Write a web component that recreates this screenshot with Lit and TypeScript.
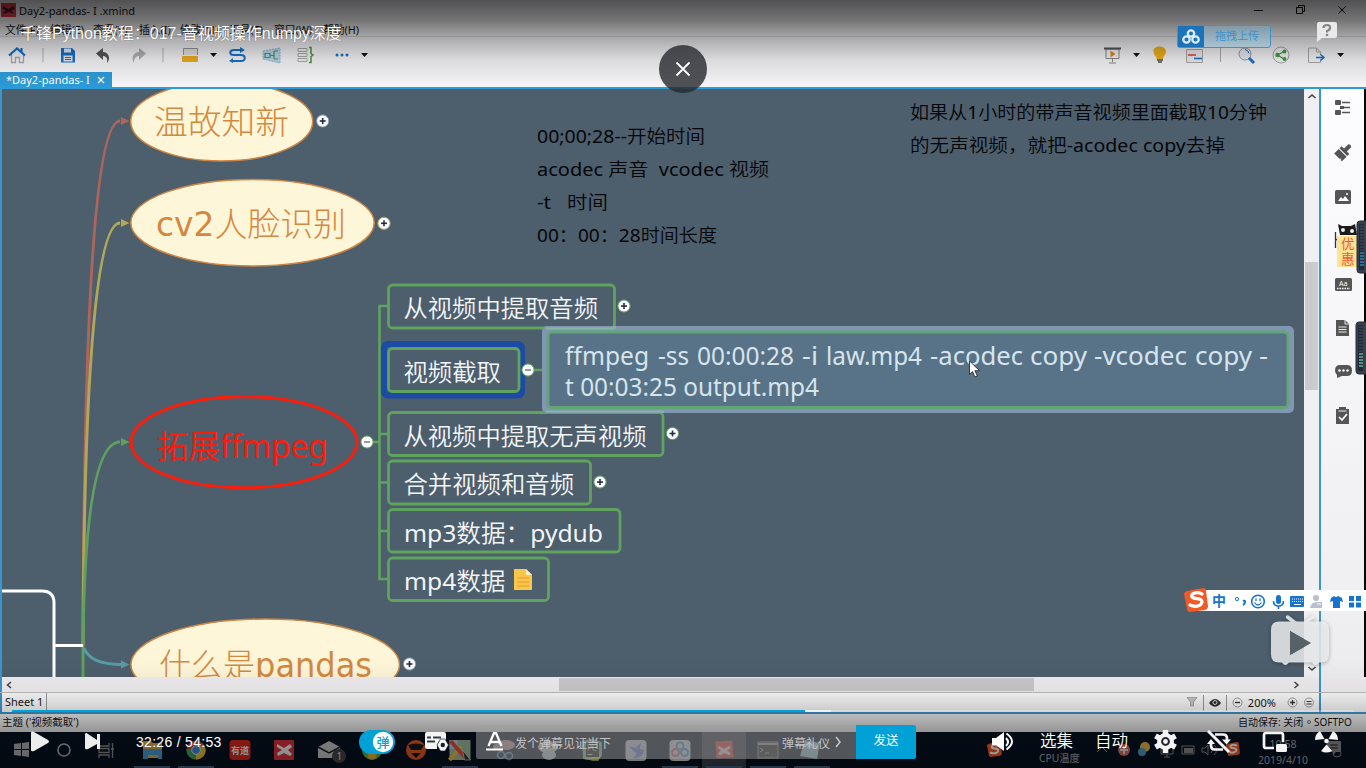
import { LitElement, html, svg, css } from "lit";
import { customElement } from "lit/decorators.js";

const icon = (w: number, h: number, body: unknown) =>
  html`<svg width=${w} height=${h} viewBox="0 0 ${w} ${h}" fill="none">${body}</svg>`;

const caret = icon(8, 20, svg`<path d="M0 8h7L3.500 12z" fill="#111"/>`);
const sogou = svg`<path d="M3 3L19 0Q22 0 22 3L24 18Q24 21 21 22L6 24Q3 24 3 21L0 6Q0 4 3 3z" fill="#f15a24"/><path d="M18 6C12 3 6 6 8 9C10 12 18 9 18 14C17 19 10 19 6 17" stroke="#fff" stroke-width="3.2" stroke-linecap="round"/>`;

/* Taskbar button: artwork centred in a 44px slot, with an optional running mark. */
const app = (cx: number, body: unknown, running = false) =>
  icon(44, 36, svg`<g transform="translate(${22 - cx} 0)">${body}</g>${running ? svg`<path d="M4 35h36" stroke="#3f5f7d" stroke-width="2"/>` : ""}`);

/* Chinese runs are set in a lighter weight than the Latin ones. */
const runs = (t: string) =>
  (t.match(/[\u2e80-\u9fff\uff00-\uffef]+|[^\u2e80-\u9fff\uff00-\uffef]+/g) ?? []).map((r) =>
    /[\u2e80-\u9fff\uff00-\uffef]/.test(r) ? svg`<tspan class="cjk">${r}</tspan>` : svg`<tspan>${r}</tspan>`);

/* ---------- mind map canvas ---------- */
interface Topic { y: number; w: number; h: number; text: string; tx: number; tw: number; plus?: number; }

const topics: Topic[] = [
  { y: 285, w: 226, h: 43, text: "从视频中提取音频", tx: 403.5, tw: 194.5, plus: 624 },
  { y: 348.5, w: 130.5, h: 43, text: "视频截取", tx: 403.5, tw: 97.5 },
  { y: 412.5, w: 274.5, h: 43, text: "从视频中提取无声视频", tx: 403.5, tw: 243, plus: 672.5 },
  { y: 461, w: 202, h: 43, text: "合并视频和音频", tx: 403.5, tw: 170.5, plus: 600 },
  { y: 509.5, w: 231.5, h: 42.5, text: "mp3数据：pydub", tx: 404, tw: 199 },
  { y: 558, w: 160, h: 42.5, text: "mp4数据", tx: 404, tw: 101.5 },
];

const command: [number, number, string][] = [
  [565, 84, "ffmpeg"], [658, 31, "-ss"], [697, 97, "00:00:28"], [802, 16, "-i"], [826, 96, "law.mp4"],
  [930, 93, "-acodec"], [1030, 57, "copy"], [1094, 93, "-vcodec"], [1195, 57, "copy"], [1259, 9, "-"],
];

const toggle = (x: number, y: number, ring: string, minus = false) => svg`
  <circle cx=${x} cy=${y} r="6.1" fill="#fff" stroke=${ring} stroke-width="1"/>
  <path d="M${x - 3} ${y}h6" stroke=${minus ? "#7c8094" : "#242a4c"} stroke-width="1.6"/>
  ${minus ? "" : svg`<path d="M${x} ${y - 3}v6" stroke="#242a4c" stroke-width="1.6"/>`}`;

@customElement("mind-canvas")
export class MindCanvas extends LitElement {
  static styles = css`
    :host { display: block; overflow: hidden; background: #4d5e6d; }
    svg { display: block; }
    text { font-family: "Noto Sans", "Noto Sans CJK SC", sans-serif; }
    .note { font-size: 18.5px; fill: #050608; }
    .cjk { font-weight: 350; }
    .topic { font-size: 24.3px; fill: #f2f5f7; }
    .cmd { font-size: 24.5px; fill: #d6e4ee; }
    .main { font-family: "DejaVu Sans", "Noto Sans CJK SC", sans-serif; font-size: 33.5px; fill: #d4883f; }
    .main .cjk { font-weight: 300; }
    .red { font-family: "Noto Sans", "Noto Sans CJK SC", sans-serif; font-size: 32px; fill: #fb1d0c; }
  `;

  private note(x: number, y: number, w: number, t: string) {
    return svg`<text class="note" x=${x} y=${y} textLength=${w} lengthAdjust="spacingAndGlyphs" xml:space="preserve">${runs(t)}</text>`;
  }

  private main(x: number, y: number, w: number, t: string) {
    return svg`<text class="main" x=${x} y=${y} textLength=${w} lengthAdjust="spacingAndGlyphs">${runs(t)}</text>`;
  }

  render() {
    const ring = "#5fa35f";
    return html`<svg width="1302" height="588" viewBox="2 89 1302 588" fill="none">
      <g stroke-width="3">
        <path d="M83 646C84 330 94 121 120 121" stroke="#b0655c"/>
        <path d="M83 646C84 400 94 223 120 223" stroke="#b0a858"/>
        <path d="M83 677V646C84 540 92 442 120 442" stroke="#5fa05e"/>
        <path d="M84 648C89 661 104 664.500 121 664.500" stroke="#569ca3"/>
        <path d="M2 591H42Q54 591 54 603V677M54 645.500H83" stroke="#fff"/>
      </g>
      <path d="M121 117L129.500 121L121 125z" fill="#b0655c"/>
      <path d="M121 219L129.500 223L121 227z" fill="#b0a858"/>
      <path d="M121 438L129.500 442L121 446z" fill="#5fa05e"/>
      <path d="M121 660.500L129.500 664.500L121 668.500z" fill="#569ca3"/>

      <g fill="#fdf6d8" stroke="#cd8444" stroke-width="1.5">
        <ellipse cx="221.700" cy="121.500" rx="91" ry="39.500"/>
        <ellipse cx="252.500" cy="222.700" rx="121.700" ry="43.300"/>
        <ellipse cx="265.200" cy="664.500" rx="134.300" ry="45.500"/>
      </g>
      <ellipse cx="244" cy="442.200" rx="113" ry="45.500" stroke="#fb1d0c" stroke-width="3"/>
      ${this.main(154, 133.5, 135, "温故知新")}
      ${this.main(156, 236, 190, "cv2人脸识别")}
      <text class="main red" x="157" y="457.500" textLength="171" lengthAdjust="spacingAndGlyphs">拓展ffmpeg</text>
      ${this.main(159, 676.5, 213, "什么是pandas")}

      <path d="M388 306H379.500V579H388M379.500 434H388M379.500 482.500H388M379.500 531H388M372 442H380M526 370H548" stroke=${ring} stroke-width="2.6"/>
      <rect x="384" y="344" width="138" height="51.500" rx="4" stroke="#1b4ba4" stroke-width="6"/>
      ${topics.map((t) => svg`
        <rect x="388.500" y=${t.y} width=${t.w} height=${t.h} rx="4" stroke=${ring} stroke-width="2.8"/>
        <text class="topic" x=${t.tx} y=${t.y + 32} textLength=${t.tw} lengthAdjust="spacingAndGlyphs">${runs(t.text)}</text>
        ${t.plus ? toggle(t.plus, t.y + 21, ring) : ""}`)}
      <path d="M514 569h12l6 6v15h-18z" fill="#fbc549"/><path d="M526 569l6 6h-6z" fill="#fff0bd"/>
      <path d="M517 578h12M517 582h12M517 586h12" stroke="#e0a030" stroke-width="1"/>
      ${toggle(367, 442, ring, true)}
      ${toggle(528, 370, ring, true)}
      ${toggle(322.7, 121, "#8899b5")}
      ${toggle(384, 223.3, "#b0a858")}
      ${toggle(409.5, 664, "#8899b5")}

      <rect x="542" y="326" width="752" height="87" rx="5" fill="#8096b1"/>
      <rect x="548" y="332" width="740" height="75.500" rx="4" fill="#587387" stroke="#62a578" stroke-width="2.8"/>
      <path d="M546 328.500H614.500V326" stroke="#86b5a3" stroke-width="2"/>
      <path d="M546 411.500H664" stroke="#86b5a3" stroke-width="2"/>
      ${command.map(([x, w, t]) => svg`<text class="cmd" x=${x} y="364.500" textLength=${w} lengthAdjust="spacingAndGlyphs">${t}</text>`)}
      <text class="cmd" x="565" y="396" textLength="254" lengthAdjust="spacingAndGlyphs">t 00:03:25 output.mp4</text>
      <path d="M969.500 361v13.500l3-3 2.400 5.500 2.500-1-2.500-5.300h4.600z" fill="#fff" stroke="#151a20" stroke-width=".8"/>

      ${this.note(537, 143, 168, "00;00;28--开始时间")}
      ${this.note(537, 176, 232, "acodec 声音  vcodec 视频")}
      ${this.note(537, 209, 71, "-t   时间")}
      ${this.note(537, 242, 180, "00：00：28时间长度")}
      ${this.note(910, 119, 357, "如果从1小时的带声音视频里面截取10分钟")}
      ${this.note(910, 152, 315, "的无声视频，就把-acodec copy去掉")}
    </svg>`;
  }
}

/* ---------- desktop: editor window and taskbar ---------- */
@customElement("desktop-view")
export class DesktopView extends LitElement {
  static styles = css`
    :host { display: grid; grid-template-rows: 20px 17px 35px 17px 588px 15px 20px 20px 36px; width: 1366px; height: 768px; overflow: hidden;
      background: #f6f5f8; color: #151515; font-family: "Noto Sans", "Noto Sans CJK SC", sans-serif; font-size: 11px; white-space: nowrap; }
    svg { display: block; flex: none; }
    .title { display: grid; grid-template-columns: 19px 1235px 42px 41px 20px; align-items: center; }
    .menu { display: grid; grid-template-columns: 45px 43px 46px 41px 49px 45px 49px 60px; padding-left: 5px; line-height: 20px; font-size: 10.8px; border-bottom: 1px solid #d8d8d8; box-sizing: border-box; }
    .tools { display: grid; padding: 8px 0 0 8px; align-items: start;
      grid-template-columns: 34px 18px 36px 35px 31px 20px 28px 19px 33px 35px 38px 26px 743px 29px 20px 33px 34px 18px 34px 36px 29px 10px; }
    .tabs { display: flex; border-bottom: 2px solid #2c9bd8; box-sizing: border-box; }
    .tab { width: 106px; padding-left: 6px; background: #2c9bd8; color: #fff; line-height: 15px; height: 15px; display: flex; gap: 7px; align-items: center; }
    .work { display: grid; grid-template-columns: 2px 1302px 15px 2px 43px 2px; }
    .blue { background: #3a97ce; }
    .black { background: #070707; }
    .vs { background: #f0eff1; display: flex; flex-direction: column; align-items: center; justify-content: space-between; }
    .vthumb { width: 13px; height: 128px; background: #cbcacc; margin-top: 34px; margin-bottom: 149px; }
    .side { display: flex; flex-direction: column; gap: 24px; padding: 10px 0 0 13px; box-sizing: border-box; background: linear-gradient(#fdfcff, #ededef); }
    .hs { display: grid; grid-template-columns: 2px 557px 475px 256px 29px 2px 45px; background: #efedef; align-items: center; }
    .hthumb { height: 13px; background: #cbc9cb; }
    .full { height: 100%; }
    .sheet { display: grid; grid-template-columns: 2px 45px 1139px 17px 28px 14px 42px 16px 16px 2px 45px; align-items: center; border-top: 1px solid #bbb; background: #fafafa; box-sizing: border-box; }
    .name { height: 19px; line-height: 18px; border-right: 1px solid #999; padding-left: 3px; box-sizing: border-box; }
    .status { display: grid; grid-template-columns: 1236px 69px 7px 52px; padding-left: 2px; border-top: 2px solid #3a93c8; box-sizing: border-box; line-height: 17px; background: #eee; font-size: 10.5px; }
    .small { font-size: 10px; }
    .task { display: grid; grid-template-columns: 43px 41px 32px repeat(16, 44px) 205px 58px 21px 20px 22px 21px 20px 25px 24px 72px 40px; padding-left: 14px; background: #07111f; align-items: center; color: #a4a6aa; box-sizing: border-box; width: 1366px; overflow: hidden; }
    .clock { line-height: 16px; text-align: center; font-size: 10.5px; width: 66px; padding-top: 4px; }
    .cpu { align-self: end; line-height: 20px; font-size: 10.3px; }
  `;

  render() {
    return html`
      <div class="title">
        ${icon(18, 20, svg`<rect x="1" y="3" width="15" height="14" fill="#e0394a"/><path d="M3 6l5.500 3L13 6l2 3-3.500 1.500L14 14l-5-2-5 2-1-1.500 3-2-4-2z" fill="#4a1a22"/>`)}
        <span>Day2-pandas- I .xmind</span>
        ${icon(12, 20, svg`<path d="M0 10.500h9" stroke="#111"/>`)}
        ${icon(12, 20, svg`<path d="M.5 7.500h6v6h-6zM2.500 7.500v-2h6v6h-2" stroke="#111"/>`)}
        ${icon(12, 20, svg`<path d="M1 6l8 8M9 6l-8 8" stroke="#111"/>`)}
      </div>
      <div class="menu"><span>文件(F)</span><span>编辑(E)</span><span>查看(V)</span><span>插入(I)</span><span>修改(M)</span><span>工具(T)</span><span>窗口(W)</span><span>帮助(H)</span></div>
      <div class="tools">
        ${icon(20, 20, svg`<path d="M3.500 9v8.500h4v-5h4v5h4V9" stroke="#aaa" stroke-width="1.300"/><path d="M1 10.500L9 3.500l8 7M13.500 3v4.500" stroke="#1674cf" stroke-width="2.200"/>`)}
        ${icon(4, 20, svg`<path d="M1 3v14" stroke="#b8b8b8"/>`)}
        ${icon(17, 20, svg`<path d="M1 3h11l3 3v11.500H1z" fill="#1674cf"/><path d="M4 3.500h7v4H4zM3.500 10.500h9v6h-9z" fill="#e8eef8"/><path d="M5 12.500h6M5 14.500h6" stroke="#1674cf"/>`)}
        ${icon(17, 20, svg`<path d="M0 8.500L7 3v4c6 0 8 7 4 11 1-5-1-7-4-7v4z" fill="#555"/>`)}
        ${icon(17, 20, svg`<path d="M15 8.500L8 3v4c-6 0-8 7-5 11 0-5 2-7 5-7v4z" fill="#b3b3b3"/>`)}
        ${icon(4, 20, svg`<path d="M1 3v14" stroke="#b8b8b8"/>`)}
        ${icon(18, 20, svg`<path d="M1.500 10V3.500h14V10" stroke="#999" fill="#e4e4e4"/><rect x="0" y="11" width="16" height="6" rx="1" fill="#eead1c"/>`)}
        ${caret}
        ${icon(18, 20, svg`<path d="M14 5H5C0 5 0 10 5 10h7c5 0 5 6 0 6H2" stroke="#1674cf" stroke-width="2"/><path d="M11 2l5 3-5 3zM4 13l-4 3 4 2z" fill="#1674cf"/>`)}
        ${icon(19, 20, svg`<path d="M1 6l17-3v15L1 14z" fill="#bad9ec" stroke="#88b6d3" stroke-dasharray="2 1"/><path d="M3 8.500h5v4H3zM12 6h4M12 14h4M8 10.500h4M12 6v8" stroke="#4a9762" stroke-width="1.200"/>`)}
        ${icon(18, 20, svg`<path d="M1 3.500h9v3H1zM1 8.500h9v3H1zM1 13.500h9v3H1z" stroke="#aaa"/><path d="M12 2.500h2v6l2 1.500-2 1.500v6h-2" stroke="#4a9b48" stroke-width="1.500"/>`)}
        ${icon(16, 20, svg`<g fill="#1674cf"><circle cx="2" cy="10" r="1.500"/><circle cx="7" cy="10" r="1.500"/><circle cx="12" cy="10" r="1.500"/></g>`)}
        ${caret}
        ${icon(19, 20, svg`<path d="M2 4h13v9.500H2zM8.500 13v4M5 18h7" stroke="#888"/><path d="M0 3.500h17" stroke="#555" stroke-width="2"/><path d="M6.500 5.500l5 3.500-5 3.500z" fill="#e78a12"/>`)}
        ${caret}
        ${icon(15, 20, svg`<path d="M3.500 12.500C-3 5 2 1.500 6.500 1.500s10 3.500 3.500 11v2h-6.500z" fill="#efb31c"/><path d="M4 15h6M5 17h4" stroke="#777" stroke-width="2"/>`)}
        ${icon(18, 20, svg`<path d="M.5 4.500h16v13H.5z" stroke="#aaa" fill="#eee"/><path d="M2 10h8" stroke="#e2443c" stroke-width="1.600"/><path d="M8 13.500h8" stroke="#1674cf" stroke-width="1.600"/>`)}
        ${icon(4, 20, svg`<path d="M0.500 3v14" stroke="#aaa"/>`)}
        ${icon(18, 20, svg`<circle cx="7" cy="9" r="6" stroke="#999" fill="#e7edf4"/><path d="M11 13l5 5" stroke="#1674cf" stroke-width="3"/><path d="M7 4.500q4 1 4 4" stroke="#1674cf"/>`)}
        ${icon(19, 20, svg`<circle cx="9" cy="10" r="8" stroke="#aaa"/><path d="M12 6.500L5.500 10l6.500 4" stroke="#4a9b48" stroke-width="1.300"/><g fill="#4a9b48"><circle cx="12.500" cy="6.500" r="2"/><circle cx="5.500" cy="10" r="2.200"/><circle cx="12.500" cy="14" r="2"/></g>`)}
        ${icon(18, 20, svg`<path d="M.5 3h8l4 4v3M12.500 14.500v3H.5V3M8.500 3v4h4" stroke="#aaa"/><path d="M8 12.500h7M12.500 9.500l3.500 3-3.500 3" stroke="#1674cf" stroke-width="1.500"/>`)}
        ${caret}
      </div>
      <div class="tabs"><div class="tab"><span>*Day2-pandas- I</span>${icon(8, 8, svg`<path d="M1 1l6 6M7 1L1 7" stroke="#fff" stroke-width="1.300"/>`)}</div></div>
      <div class="work">
        <div class="blue"></div>
        <mind-canvas></mind-canvas>
        <div class="vs">
          ${icon(13, 14, svg`<path d="M3.500 9l3.500-3 3.500 3" stroke="#444" stroke-width="1.600"/>`)}
          <div class="vthumb"></div>
          ${icon(13, 14, svg`<path d="M3.500 4l3.500 3L10.500 4" stroke="#444" stroke-width="1.600"/>`)}
        </div>
        <div class="blue"></div>
        <div class="side">
          ${icon(20, 20, svg`<g fill="#555"><rect x="1" y="1" width="6" height="5" rx="1"/><rect x="1" y="11" width="6" height="5" rx="1"/><rect x="6" y="7" width="4" height="3"/></g><path d="M8 3.500h8M10 8.500h6M8 13.500h8" stroke="#555" stroke-width="1.500"/>`)}
          ${icon(20, 20, svg`<g transform="translate(9 9.500) rotate(45)" fill="#555"><path d="M-2-9.500q2-2 4 0v6h3.500v3h-11v-3H-2z"/><path d="M-5.500 .5h11V7h-2V5.500L2 7h-7.500z"/></g>`)}
          ${icon(20, 20, svg`<rect x="1" y="3" width="16" height="14" rx="1.500" fill="#555"/><path d="M4 14l3-4 2 2 2-3 4 5z" fill="#fff"/><circle cx="13" cy="7" r="1" fill="#fff"/>`)}
          ${icon(20, 20, svg`<path d="M1.500 1v16M1 9l4-1" stroke="#333" stroke-width="1.300"/>`)}
          ${icon(20, 20, svg`<rect x="1" y="3" width="17" height="13" rx="1.500" fill="#555"/><path d="M3 13.500h13" stroke="#fff" stroke-width="1.500" stroke-dasharray="1.500 1"/><text x="5" y="10.500" font-size="7" fill="#fff">Aa</text>`)}
          ${icon(20, 20, svg`<path d="M2 1h9l4 4v12H2z" fill="#555"/><path d="M11 1v4h4M4.500 8h8M4.500 10.500h8M4.500 13h8" stroke="#e9e9e9"/>`)}
          ${icon(20, 20, svg`<path d="M6 2h7q5 0 5 5.500T13 13H8l-5 2v-3q-2-2-2-4.500Q1 2 6 2z" fill="#555"/><g fill="#fff"><circle cx="5.500" cy="7.500" r="1.200"/><circle cx="9.500" cy="7.500" r="1.200"/><circle cx="13.500" cy="7.500" r="1.200"/></g>`)}
          ${icon(20, 20, svg`<path d="M2 2h13v15H2zM5 0h7v2H5z" fill="#555"/><path d="M4.500 4h8" stroke="#eee"/><path d="M5 10l3 3 5-6" stroke="#fff" stroke-width="1.700"/>`)}
        </div>
        <div class="black"></div>
      </div>
      <div class="hs">
        <div class="blue full"></div>${icon(14, 14, svg`<path d="M9 4L5.500 7 9 10" stroke="#444" stroke-width="1.500"/>`)}
        <div class="hthumb"></div><span></span>${icon(14, 14, svg`<path d="M4.500 4L8 7l-3.500 3" stroke="#444" stroke-width="1.500"/>`)}<div class="blue full"></div>
      </div>
      <div class="sheet">
        <div class="blue full"></div><div class="name">Sheet 1</div><span></span>
        ${icon(14, 18, svg`<path d="M1 3.500h10L7.500 8v4h-3V8z" fill="#c7c7c7" stroke="#aaa"/>`)}
        ${icon(24, 18, svg`<path d="M.5 1v16M23.500 1v16" stroke="#999"/><path d="M6 9q6-8 12 0q-6 7.500-12 0z" fill="#333"/><circle cx="12" cy="8.500" r="2" stroke="#ddd"/>`)}
        ${icon(14, 18, svg`<circle cx="6.500" cy="8.500" r="4.500" stroke="#999"/><path d="M4 8.500h5" stroke="#333" stroke-width="1.300"/>`)}
        <span>&nbsp;200%</span>
        ${icon(14, 18, svg`<circle cx="5.500" cy="8.500" r="4.500" stroke="#999"/><path d="M3 8.500h5M5.500 6v5" stroke="#333" stroke-width="1.300"/>`)}
        ${icon(14, 18, svg`<circle cx="6" cy="8.500" r="4.500" stroke="#999"/><path d="M3.500 7.500h5M3.500 10h5" stroke="#333"/>`)}
        <div class="blue full"></div>
      </div>
      <div class="status"><span>主题 ('视频截取')</span><span class="small">自动保存: 关闭</span>${icon(7, 16, svg`<circle cx="2" cy="8" r="1.500" stroke="#777"/>`)}<span class="small">SOFTPO</span></div>
      <div class="task">
        ${icon(16, 36, svg`<path d="M0 12l7-1v6H0zM8 11l7-1v7H8zM0 18h7v6l-7-1zM8 18h7v7l-7-1z" fill="#a9abb0"/>`)}
        ${icon(18, 36, svg`<circle cx="7" cy="18" r="6" stroke="#a9abb0" stroke-width="1.600"/>`)}
        ${icon(20, 36, svg`<path d="M1 11v3h10v-3M1 26v-3h10v3M1 16.500h10v4H1zM14.500 11v15M13 17h3" stroke="#888" stroke-width="1.300"/>`)}
        ${app(17, svg`<path d="M8 9h8l2 2h9v15H8z" fill="#d4a64c"/><path d="M8 17h19v10h-4v-4h-10v4h-5z" fill="#459bd0"/>`, true)}
        ${app(18, svg`<circle cx="18" cy="18" r="9.500" fill="#c94136"/><path d="M8.500 17a9.500 9.500 0 009.500 10.500l4-8-8-2z" fill="#3fa25e"/><path d="M18 27.500a9.500 9.500 0 008.500-14H18z" fill="#e0bb38"/><circle cx="18" cy="18" r="4.300" fill="#3a87de" stroke="#ddd"/>`, true)}
        ${app(17.5, svg`<rect x="7" y="8" width="21" height="20" rx="4" fill="#d8281e"/><text x="8.500" y="22" font-size="9" font-weight="700" fill="#eee">有道</text>`)}
        ${app(16, svg`<rect x="6" y="8" width="20" height="20" rx="1" fill="#d9323f"/><path d="M9 12l7 4 6-4 2 3-4 3 4 4-2 2-6-3-6 3-1-3 5-3-5-3z" fill="#eee"/>`)}
        ${app(16, svg`<path d="M6 15l11-6 11 6v11H6z" fill="#c4c4c4"/><path d="M6 15l11 6 11-6" stroke="#17212b" stroke-width="1.500"/><circle cx="27" cy="24" r="7" fill="#444"/><text x="24.500" y="28" font-size="10" fill="#ddd">1</text>`)}
        ${app(8, svg`<circle cx="8" cy="18" r="10" fill="#5cae55"/><circle cx="8" cy="23" r="4.500" fill="#e0b133"/>`)}
        ${app(11, svg`<circle cx="11" cy="18" r="10" fill="#df5a20"/><path d="M3 13q8-3 16 0l-3 5H6zM6 21h10l-5 5z" fill="#181818"/>`)}
        ${app(12.5, svg`<rect x="2" y="8" width="21" height="20" fill="#9dbb9c"/><path d="M2 8h8v9H2z" fill="#b5cde0"/><path d="M2 28l12-14" stroke="#e5bd55" stroke-width="4"/><path d="M3 9l15 17" stroke="#e0503f" stroke-width="4"/><path d="M15 18l8 10h-6z" fill="#333" stroke="#ddd" stroke-width=".7"/>`, true)}
        ${app(12, svg`<ellipse cx="14" cy="13" rx="9" ry="5" fill="#c09a9c"/><ellipse cx="5" cy="15" rx="4" ry="3" fill="#c09a9c"/><circle cx="9" cy="23" r="3.500" stroke="#5c93c5" stroke-width="1.500"/><circle cx="17" cy="24" r="3.500" stroke="#5c93c5" stroke-width="1.500"/>`)}
        ${app(13, svg`<ellipse cx="13" cy="15" rx="10" ry="6" fill="#d2d2d2"/><ellipse cx="14" cy="23" rx="7" ry="5" fill="#b9cbd1"/><circle cx="10" cy="15" r="1" fill="#555"/><circle cx="16" cy="15" r="1" fill="#555"/>`)}
        ${app(16, svg`<path d="M6 9l10-2 10 3v13l-8 6-11-2z" fill="#71be8d"/><path d="M8 27l18-4-4 6z" fill="#d5d04a"/><rect x="10" y="11" width="13" height="14" fill="#222"/><text x="11" y="19" font-size="8" fill="#ddd">PC</text><path d="M11.500 22.500h5" stroke="#ddd"/>`)}
        ${app(17.5, svg`<rect x="7" y="8" width="21" height="21" rx="4" fill="#c1c7d2"/><path d="M10 14l7 2 6-6-2 7 5 1q-3 9-11 8l3-4z" fill="#6d80dc"/>`)}
        ${app(15.5, svg`<rect x="5" y="8" width="21" height="21" rx="4" fill="#cdd0d5"/><g stroke="#4794cf" stroke-width="2"><circle cx="15.500" cy="14" r="3.500"/><circle cx="11" cy="20.500" r="3.500" stroke="#c96a74"/><circle cx="20" cy="20.500" r="3.500"/></g>`, true)}
        ${app(22, svg`<rect width="44" height="36" fill="#363c48"/><rect x="14" y="9" width="17" height="17" fill="#dc4640" transform="rotate(-4 22 18)"/><path d="M17 14l5 3 5-3 2 2-4 2.500 4 3-2 1.500-5-2-4 2.500-2-2 3-3-3.500-2.500z" fill="#ddd"/>`, true)}
        ${app(19, svg`<rect x="9" y="10" width="20" height="16" fill="#292b2d" stroke="#888"/><path d="M9 12h20" stroke="#999" stroke-width="2"/><path d="M11 16l3 2-3 2M16 21h4" stroke="#aaa"/>`, true)}
        ${app(19, svg`<path d="M12 8l15 3-3 16-17-3z" fill="#98c0ca"/><path d="M13 11l12 2-1 4-12-2z" fill="#dfe9ec"/>`, true)}
        ${icon(200, 36, svg`<g transform="translate(153 10) scale(.62)">${sogou}</g>`)}
        <span class="cpu">CPU温度</span>
        ${icon(16, 36, svg`<path d="M0 20l5-5 5 5" stroke="#999"/>`)}
        ${icon(16, 36, svg`<circle cx="6" cy="18" r="6" fill="#d26a60"/><path d="M2 18h8M6 14v8" stroke="#ddd" stroke-width="2"/>`)}
        ${icon(16, 36, svg`<circle cx="7" cy="15" r="5" fill="#e0b64a"/><circle cx="4" cy="20" r="4" fill="#4d9ac2"/>`)}
        ${icon(16, 36, svg`<path d="M1 13h12v9H1zM7 22v3M4 25h6" stroke="#888"/>`)}
        ${icon(16, 36, svg`<path d="M1 14h12v8H1z" stroke="#888"/><rect x="3" y="16" width="9" height="5" fill="#888"/>`)}
        ${icon(20, 36, svg`<path d="M1 16h3l3-3v10l-3-3H1zM10 15q3 3 0 6M13 13q5 5 0 10" stroke="#888"/>`)}
        ${icon(16, 36, svg`<g transform="translate(0 10) scale(.58)">${sogou}</g>`)}
        <div class="clock">10:58<br>2019/4/10</div>
        ${icon(36, 36, svg`<path d="M5 9h14v11h-5l-3 3v-3H5z" fill="#888"/><path d="M8 13h8M8 16h8" stroke="#222"/><circle cx="15" cy="21" r="4" stroke="#888"/>`)}
      </div>`;
  }
}

/* ---------- video player chrome ---------- */
@customElement("player-overlay")
export class PlayerOverlay extends LitElement {
  static styles = css`
    :host { position: absolute; inset: 0; display: block; overflow: hidden; color: #fff; white-space: nowrap; font-family: "Liberation Sans", "Noto Sans CJK SC", sans-serif; }
    svg { display: block; }
    .shade-top { position: absolute; inset: 0 0 auto 0; height: 88px; background: linear-gradient(rgba(0,0,0,.67), rgba(0,0,0,.53) 20px, rgba(0,0,0,.31) 38px, rgba(0,0,0,.11) 60px, transparent); }
    .shade-bottom { position: absolute; inset: auto 0 0 0; height: 110px; background: linear-gradient(transparent, rgba(0,0,0,.06) 35px, rgba(0,0,0,.2) 55px, rgba(0,0,0,.37) 73px, rgba(0,0,0,.42)); }
    .caption { position: absolute; left: 20px; top: 22px; font-size: 16px; line-height: 24px; text-shadow: 0 0 1px #0008; }
    .close { position: absolute; left: 659px; top: 45px; width: 48px; height: 48px; border-radius: 50%; background: rgba(37,40,45,.8); display: grid; place-items: center; }
    .upload { position: absolute; left: 1177px; top: 25px; width: 94px; height: 23px; box-sizing: border-box; border: 1px solid #3f93cc; border-radius: 3px; background: linear-gradient(#829aa8, #a9c2d0); display: grid; grid-template-columns: 26px 1fr; color: #3d92ce; font-size: 11px; line-height: 21px; text-align: center; }
    .disk { background: #1b74bb; display: grid; place-items: center; }
    .help { position: absolute; left: 1316px; top: 21px; }
    .promo { position: absolute; left: 1335px; top: 222px; width: 22px; height: 46px; }
    .meter1 { position: absolute; left: 1356px; top: 220px; }
    .meter2 { position: absolute; left: 1355px; top: 321px; }
    .ime { position: absolute; left: 1196px; top: 590px; width: 170px; height: 21px; background: #fff; display: grid; grid-template-columns: 21px 17px 21px 19px 20px 20px 19px 17px; padding-left: 16px; align-items: center; box-sizing: border-box; color: #1674cf; }
    .ime-logo { position: absolute; left: 1184px; top: 588px; }
    .zh { font-size: 14px; font-weight: 700; line-height: 20px; }
    .tv { position: absolute; left: 1269px; top: 613px; filter: drop-shadow(0 1px 2px rgba(0,0,0,.35)); }
    .progress { position: absolute; left: 12px; top: 710px; width: 1342px; height: 2px; display: grid; grid-template-columns: 793px 26px 1fr; background: rgba(255,255,255,.25); }
    .played { background: #00a1d6; height: 2px; }
    .loaded { background: rgba(255,255,255,.6); }
    .controls { position: absolute; left: 0; top: 723px; width: 1366px; height: 37px; display: grid; align-items: center;
      grid-template-columns: 31px 54px 51px 223px 65px 52px 380px 60px 76px 48px 55px 59px 53px 55px 53px 40px; }
    .time { font-size: 14px; letter-spacing: .3px; }
    .entry { height: 34px; margin-top: 1px; background: rgba(160,160,160,.5); border-radius: 2px 0 0 2px; display: grid; grid-template-columns: 29px 267px 53px 20px; padding-left: 10px; align-items: center; box-sizing: border-box; color: #c3c3c5; font-size: 12px; }
    .send { height: 34px; margin-top: 1px; background: #00a1d6; text-align: center; line-height: 33px; font-size: 12.5px; border-radius: 0 2px 2px 0; }
    .label { font-size: 16.5px; line-height: 34px; font-weight: 350; padding-bottom: 2px; }
  `;

  private meter(active: string) {
    const bars = Array.from({ length: 14 }, (_, i) => i);
    return icon(11, 54, svg`<rect x="1" y="1" width="14" height="52" rx="3" fill="#3a3f4c" stroke="#252a35"/><rect x="3" y="4" width="5" height="46" fill="#222935"/>
      ${bars.map((i) => svg`<path d="M4 ${6 + i * 3}h4" stroke=${i > 8 ? active : "#354754"} stroke-width="1.500"/>`)}`);
  }

  render() {
    return html`
      <div class="promo">${icon(22, 46, svg`<rect x="2" y="14" width="20" height="31" fill="#ffe395"/><path d="M3 2l4 2h9l4-2 2 11H5z" fill="#1b1b1b"/><circle cx="8" cy="8" r="2" fill="#eee"/><circle cx="17" cy="9" r="2" fill="#eee"/><text x="6" y="27" font-size="13.500" fill="#f05b35">优</text><text x="6" y="41.500" font-size="13.500" fill="#f05b35">惠</text>`)}</div>
      <div class="meter1">${this.meter("#278ab9")}</div>
      <div class="meter2">${this.meter("#65b5a0")}</div>
      <div class="ime">
        <span class="zh">中</span>
        ${icon(15, 20, svg`<circle cx="4" cy="8" r="1.600" stroke="#1674cf"/><path d="M10 10q2-1 2 1t-2 3" stroke="#1674cf" stroke-width="2"/>`)}
        ${icon(17, 20, svg`<circle cx="8" cy="10.500" r="6.300" stroke="#1674cf" stroke-width="1.600"/><path d="M6 7.500v2.500M10 7.500v2.500M4.500 11.500q3.500 5 7 0" stroke="#1674cf" stroke-width="1.300"/>`)}
        ${icon(15, 20, svg`<rect x="5" y="4" width="5" height="9" rx="2.500" fill="#1674cf"/><path d="M2.500 10q0 5 5 5t5-5M7.500 15v3" stroke="#1674cf" stroke-width="1.600"/>`)}
        ${icon(16, 20, svg`<rect x="0" y="5" width="14" height="11" rx="1" fill="#1674cf"/><path d="M2 8h11M2 10.500h11" stroke="#fff" stroke-dasharray="1 1"/><path d="M4 13.500h7" stroke="#fff"/>`)}
        ${icon(15, 20, svg`<circle cx="6" cy="7" r="3" fill="#b9bed0"/><path d="M0 17q1-6 7-6h5v6z" fill="#b9bed0"/><path d="M7 13h4" stroke="#fff"/>`)}
        ${icon(15, 20, svg`<path d="M4 5q2 2 4 0l4 2 1 4-3-1v7H3v-7l-3 1 1-4z" fill="#1674cf"/>`)}
        ${icon(15, 20, svg`<g fill="#1674cf"><rect x="0" y="5" width="5" height="5"/><rect x="7" y="5" width="5" height="5"/><rect x="0" y="11.500" width="5" height="5"/><rect x="7" y="11.500" width="5" height="5"/></g>`)}
      </div>
      <div class="ime-logo">${icon(25, 25, sogou)}</div>
      <div class="shade-top"></div>
      <div class="shade-bottom"></div>
      <div class="upload"><div class="disk">${icon(20, 18, svg`<g stroke="#ddebf5" stroke-width="2.300"><circle cx="10" cy="5.500" r="3.200"/><circle cx="5.500" cy="11.500" r="3.200"/><circle cx="14.500" cy="11.500" r="3.200"/></g>`)}</div><span>拖拽上传</span></div>
      <div class="caption">千锋Python教程：017-音视频操作numpy深度</div>
      <div class="close">${icon(16, 16, svg`<path d="M1.500 1.500l13 13M14.500 1.500l-13 13" stroke="#fff" stroke-width="1.800"/>`)}</div>
      <div class="help">${icon(22, 22, svg`<path d="M3 1h16q2 0 2 2v12q0 2-2 2H6l-5 4V3q0-2 2-2z" fill="#e9e9e9"/><path d="M7.500 7q0-3 3.500-3t3 3q0 2-3 3v1.500" stroke="#858585" stroke-width="2.200"/><circle cx="11" cy="14" r="1.300" fill="#858585"/>`)}</div>
      <div class="tv">${icon(64, 56, svg`<g opacity=".85"><path d="M18.500 4l9 7M43.500 4L35 11" stroke="#f0f2f3" stroke-width="3.500" stroke-linecap="round"/><path fill-rule="evenodd" d="M10 8.500h42q8 0 8 8v25q0 8-8 8H50q-3 5-7 0H20q-4 5-7 0H10q-8 0-8-8V16.500q0-8 8-8zM21 18v24l21-12z" fill="#eef0f1"/></g><path d="M21 18v24l21-12z" fill="#56616a"/>`)}</div>
      <div class="progress"><div class="played"></div><div class="loaded"></div></div>
      <div class="controls">
        <span></span>
        ${icon(20, 22, svg`<path d="M0 2q0-3 3-1l14 8q2 1.500 0 3L3 20q-3 1-3-1z" fill="#fff" opacity=".93"/>`)}
        ${icon(18, 18, svg`<path d="M0 1q1-2 3 0l9 6V1h3v15h-3v-5l-9 5q-3 1-3-1z" fill="#fff" opacity=".93"/>`)}
        <span class="time">32:26 / 54:53</span>
        ${icon(37, 24, svg`<rect width="36" height="24" rx="12" fill="#00a1d6"/><circle cx="24" cy="12" r="10.200" fill="#fff"/><text x="17.500" y="17" font-size="13" font-weight="500" fill="#00a1d6">弹</text>`)}
        ${icon(26, 22, svg`<path d="M3 1h17q2 0 2 2v6q-10-1-9 9H3q-2 0-2-2V3q0-2 2-2z" fill="#f4f4f4"/><path d="M3 6.500h4M9 6.500h8M3 10.500h8" stroke="#343a42" stroke-width="1.800"/><path d="M16.500 8h4.500l3.500 6-3.500 6h-4.500L13 14z" fill="#f4f4f4" stroke="#18202b" stroke-width=".7"/><circle cx="18.800" cy="14" r="2.200" fill="#18202b"/>`)}
        <div class="entry">
          ${icon(18, 20, svg`<path d="M2.500 14L8 1h2l5.500 13M5 10h8" stroke="#fff" stroke-width="2.300"/><path d="M0 17.500h17" stroke="#fff" stroke-width="2"/>`)}
          <span>发个弹幕见证当下</span><span>弹幕礼仪</span>
          ${icon(8, 12, svg`<path d="M1 1l4 5-4 5" stroke="#c9c9ca" stroke-width="1.500"/>`)}
        </div>
        <div class="send">发送</div>
        <span></span>
        ${icon(22, 22, svg`<path d="M0 7h4l8-6v19l-8-6H0z" fill="#fff"/><path d="M14 7q4 4 0 8M14.500 2.500q11 8 0 16" stroke="#fff" stroke-width="2"/>`)}
        <span class="label">选集</span><span class="label">自动</span>
        ${icon(24, 24, svg`<g stroke="#f4f4f4" stroke-width="5.500"><path d="M11.500 0v23M1.500 5.800l20 11.400M1.500 17.200l20-11.400"/></g><circle cx="11.500" cy="11.500" r="8.500" fill="#f4f4f4"/><circle cx="11.500" cy="11.500" r="4.400" fill="#20252e"/><circle cx="11.500" cy="11.500" r="2.400" fill="#f4f4f4"/>`)}
        ${icon(26, 24, svg`<path d="M8 4.500h8q4 0 4 4v2M16 19.500H8q-4 0-4-4v-3" stroke="#f4f4f4" stroke-width="2.700"/><path d="M15 9.500h9l-4.500 5zM0 14h8l-4-5z" fill="#f4f4f4"/><path d="M1 1l21 21" stroke="#f4f4f4" stroke-width="3"/>`)}
        ${icon(26, 24, svg`<path d="M12 18H4q-2 0-2-2V5q0-2 2-2h15q2 0 2 2v7" stroke="#f4f4f4" stroke-width="2.700"/><rect x="14" y="14" width="11" height="8" rx="1.500" fill="#f4f4f4"/>`)}
        ${icon(26, 24, svg`<path d="M5 1l4.500 8L0 10Q0 4 5 1zM18 1l-4.500 8 9.500 1Q23 4 18 1zM11.500 14.500L6 21q5 3 11 0z" fill="#f4f4f4"/><circle cx="11.500" cy="11" r="2.300" fill="#f4f4f4"/>`)}
      </div>`;
  }
}

@customElement("app-root")
export class AppRoot extends LitElement {
  static styles = css`
    :host { display: block; position: relative; width: 1366px; height: 768px; overflow: hidden; }
  `;

  render() {
    return html`<desktop-view></desktop-view><player-overlay></player-overlay>`;
  }
}
